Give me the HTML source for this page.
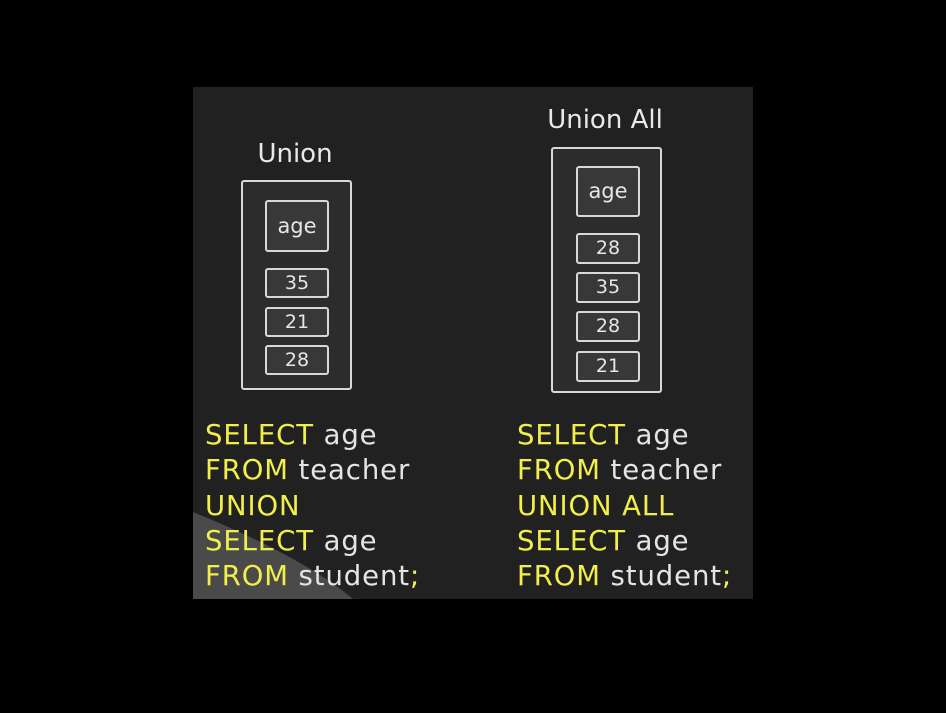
<!DOCTYPE html>
<html><head><style>
html,body{margin:0;padding:0;background:#000;width:946px;height:713px;overflow:hidden;font-family:"DejaVu Sans","Liberation Sans",sans-serif;}
#p{position:absolute;left:193px;top:87px;width:560px;height:512px;background:#212121;overflow:hidden;}
.b{position:absolute;box-sizing:border-box;border:2px solid #d8d8d8;border-radius:3px;background:#383838;color:#e6e6e6;text-align:center;}
.o{background:#2c2c2c;}
.t{position:absolute;color:#e8e8e8;font-size:26px;text-align:center;width:200px;}
.c{position:absolute;font-size:27.5px;letter-spacing:0.9px;line-height:35.3px;color:#e4e4e4;white-space:pre;}
.y{color:#f2ee4a;}
</style></head><body>
<div id="p">
<svg style="position:absolute;left:0;top:0" width="560" height="512"><path d="M0 425 Q110 470 160 512 L0 512 Z" fill="#4a4a4a"/></svg>
<div class="t" style="left:2px;top:52px">Union</div>
<div class="t" style="left:312px;top:18px">Union All</div>
<div class="b o" style="left:48px;top:93px;width:111px;height:210px"></div>
<div class="b" style="left:72px;top:113px;width:64px;height:52px;line-height:48px;font-size:21px">age</div>
<div class="b" style="left:72px;top:181px;width:64px;height:30px;line-height:26px;font-size:19px">35</div>
<div class="b" style="left:72px;top:220px;width:64px;height:30px;line-height:26px;font-size:19px">21</div>
<div class="b" style="left:72px;top:258px;width:64px;height:30px;line-height:26px;font-size:19px">28</div>
<div class="b o" style="left:358px;top:60px;width:111px;height:246px"></div>
<div class="b" style="left:383px;top:79px;width:64px;height:51px;line-height:47px;font-size:21px">age</div>
<div class="b" style="left:383px;top:146px;width:64px;height:31px;line-height:27px;font-size:19px">28</div>
<div class="b" style="left:383px;top:185px;width:64px;height:31px;line-height:27px;font-size:19px">35</div>
<div class="b" style="left:383px;top:224px;width:64px;height:31px;line-height:27px;font-size:19px">28</div>
<div class="b" style="left:383px;top:264px;width:64px;height:31px;line-height:27px;font-size:19px">21</div>
<div class="c" style="left:12px;top:331px"><span class="y">SELECT</span> age
<span class="y">FROM</span> teacher
<span class="y">UNION</span>
<span class="y">SELECT</span> age
<span class="y">FROM</span> student<span class="y">;</span></div>
<div class="c" style="left:324px;top:331px"><span class="y">SELECT</span> age
<span class="y">FROM</span> teacher
<span class="y">UNION ALL</span>
<span class="y">SELECT</span> age
<span class="y">FROM</span> student<span class="y">;</span></div>
</div>
</body></html>
